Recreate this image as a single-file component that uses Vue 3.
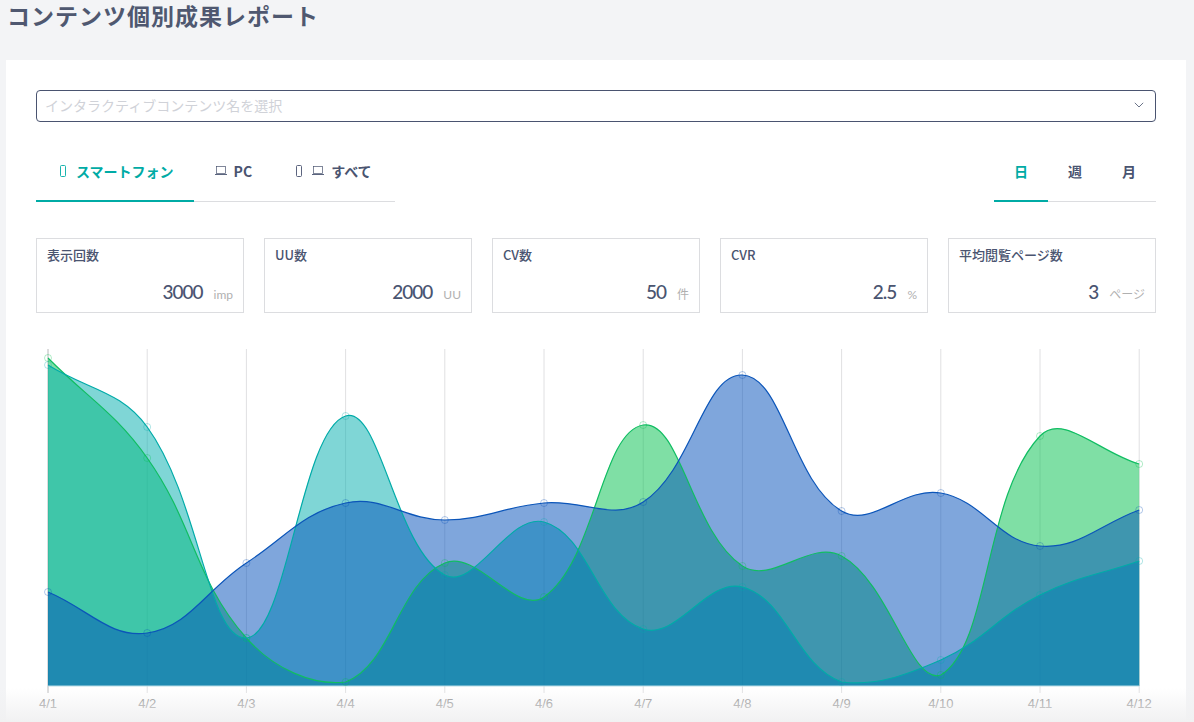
<script setup>
import { ref, computed } from 'vue';

const deviceTabs = [
  { label: 'スマートフォン', icons: ['phone'] },
  { label: 'PC', icons: ['laptop'] },
  { label: 'すべて', icons: ['phone', 'laptop'] }
];
const periodTabs = ['日', '週', '月'];
const activeDevice = ref(0);
const activePeriod = ref(0);

const stats = [
  { title: '表示回数', value: '3000', unit: 'imp' },
  { title: 'UU数', value: '2000', unit: 'UU' },
  { title: 'CV数', value: '50', unit: '件' },
  { title: 'CVR', value: '2.5', unit: '%' },
  { title: '平均閲覧ページ数', value: '3', unit: 'ページ' }
];

const labels = ['4/1', '4/2', '4/3', '4/4', '4/5', '4/6', '4/7', '4/8', '4/9', '4/10', '4/11', '4/12'];

// chart coordinates: svg starts at page y=345
const series = [
  { name: 'green', fill: 'rgba(0,191,75,0.5)', line: '#10bd62', dot: 'rgba(0,191,75,0.3)', ys: [13, 113, 293, 337, 218, 252, 80, 221, 211, 330, 91, 119] },
  { name: 'teal', fill: 'rgba(0,173,173,0.5)', line: '#00aba8', dot: 'rgba(0,173,173,0.3)', ys: [20, 82, 293, 71, 230, 177, 284, 242, 337, 315, 250, 216] },
  { name: 'blue', fill: 'rgba(0,77,185,0.5)', line: '#0b55b9', dot: 'rgba(0,77,185,0.3)', ys: [247, 288, 218, 158, 175, 158, 157, 30, 166, 148, 201, 165] }
];

const baseY = 341;
const startX = 12;
const stepX = 99.2;
const xs = labels.map((_, i) => startX + i * stepX);

// same spline as a tension 0.4 line chart
const spline = (ys) => {
  const pts = ys.map((y, i) => ({ x: xs[i], y }));
  const dist = (a, b) => Math.hypot(a.x - b.x, a.y - b.y);
  const ctrl = pts.map((cur, i) => {
    const prev = pts[i - 1] || cur;
    const next = pts[i + 1] || cur;
    const d01 = dist(prev, cur);
    const d12 = dist(cur, next);
    const fa = 0.4 * (d01 / (d01 + d12));
    const fb = 0.4 * (d12 / (d01 + d12));
    return {
      inX: cur.x - fa * (next.x - prev.x),
      inY: Math.min(cur.y - fa * (next.y - prev.y), baseY),
      outX: cur.x + fb * (next.x - prev.x),
      outY: Math.min(cur.y + fb * (next.y - prev.y), baseY)
    };
  });
  let d = `M${pts[0].x} ${pts[0].y}`;
  for (let i = 1; i < pts.length; i++) {
    d += ` C${ctrl[i - 1].outX} ${ctrl[i - 1].outY} ${ctrl[i].inX} ${ctrl[i].inY} ${pts[i].x} ${pts[i].y}`;
  }
  return d;
};

const lines = computed(() => series.map((s) => {
  const d = spline(s.ys);
  return { ...s, d, area: `${d} L${xs[xs.length - 1]} ${baseY} L${xs[0]} ${baseY} Z` };
}));
</script>

<template>
  <div class="page">
    <h1 class="title">コンテンツ個別成果レポート</h1>
    <div class="card">
      <div class="select">
        <span class="placeholder">インタラクティブコンテンツ名を選択</span>
        <svg class="chevron" width="10" height="6" viewBox="0 0 10 6"><path d="M0.8 0.8 L5 5 L9.2 0.8" fill="none" stroke="#6b7489" stroke-width="1" /></svg>
      </div>

      <div class="tabs-row">
        <div class="tabs">
          <div
            v-for="(tab, i) in deviceTabs"
            :key="tab.label"
            class="tab"
            :class="{ active: activeDevice === i }"
            @click="activeDevice = i"
          >
            <template v-for="icon in tab.icons" :key="icon">
              <svg v-if="icon === 'phone'" class="icon" width="12" height="12" viewBox="0 0 12 12">
                <rect x="3.5" y="0.5" width="5" height="11" rx="1" fill="none" stroke="currentColor" stroke-width="0.9" />
              </svg>
              <svg v-else class="icon" width="12" height="9" viewBox="0 0 12 9">
                <rect x="1.5" y="0.5" width="9" height="7" fill="none" stroke="currentColor" stroke-width="0.7" />
                <path d="M0 8.5 H12" stroke="currentColor" stroke-width="0.9" />
              </svg>
            </template>
            <span>{{ tab.label }}</span>
          </div>
        </div>
        <div class="tabs period">
          <div
            v-for="(tab, i) in periodTabs"
            :key="tab"
            class="tab"
            :class="{ active: activePeriod === i }"
            @click="activePeriod = i"
          >{{ tab }}</div>
        </div>
      </div>

      <div class="stats">
        <div v-for="stat in stats" :key="stat.title" class="stat">
          <div class="stat-title">{{ stat.title }}</div>
          <div class="stat-value">
            <span class="num">{{ stat.value }}</span>
            <span class="unit">{{ stat.unit }}</span>
          </div>
        </div>
      </div>

      <svg class="chart" width="1120" height="372" viewBox="0 0 1120 372">
        <line v-for="(x, i) in xs" :key="x" :x1="x" :x2="x" y1="4" y2="348" :stroke="i === 0 ? '#b8b8ba' : '#e0e0e2'" stroke-width="1" />
        <path v-for="s in lines" :key="s.name" :d="s.area" :fill="s.fill" />
        <line :x1="xs[0]" :x2="xs[11]" :y1="baseY" :y2="baseY" stroke="#b9dde6" stroke-width="1" />
        <path v-for="s in lines" :key="s.name + '-line'" :d="s.d" fill="none" :stroke="s.line" stroke-width="1.2" />
        <g v-for="s in lines" :key="s.name + '-dots'">
          <circle v-for="(y, i) in s.ys" :key="i" :cx="xs[i]" :cy="y" r="3.5" fill="none" :stroke="s.dot" stroke-width="1" />
        </g>
        <text v-for="(label, i) in labels" :key="label" class="axis-label" :x="xs[i]" y="363" text-anchor="middle">{{ label }}</text>
      </svg>
    </div>
    <div class="bottom-fade"></div>
  </div>
</template>

<style scoped>
.page {
  position: relative;
  height: 722px;
  overflow: hidden;
  background: #f3f4f6;
  font-family: "Noto Sans CJK JP", "Noto Sans", sans-serif;
  color: #4a5470;
}

.title {
  margin: 0;
  height: 60px;
  padding-left: 7px;
  font-size: 23px;
  line-height: 30px;
  font-weight: 700;
  letter-spacing: 1px;
  color: #4f5870;
}

.card {
  margin: 0 8px 0 6px;
  height: 700px;
  padding: 30px 30px 0;
  box-sizing: border-box;
  background: #fff;
}

.select {
  display: flex;
  align-items: center;
  justify-content: space-between;
  height: 32px;
  padding: 0 11px 3px 8px;
  box-sizing: border-box;
  border: 1px solid #4a5470;
  border-radius: 4px;
}

.placeholder {
  font-size: 14px;
  color: #d0d2d8;
}

.tabs-row {
  display: flex;
  justify-content: space-between;
  margin-top: 27px;
}

.tabs {
  display: flex;
  width: 359px;
  height: 52px;
  border-bottom: 1px solid #dcdde0;
}

.tabs.period {
  width: 162px;
}

.tab {
  flex: none;
  display: flex;
  align-items: center;
  justify-content: center;
  gap: 7px;
  padding: 0 20px 8px 21px;
  margin-bottom: -1px;
  font-size: 14px;
  font-weight: 700;
  white-space: nowrap;
  color: #4a5470;
  border-bottom: 2px solid transparent;
}

.period .tab {
  width: 54px;
  padding: 0 0 8px;
  box-sizing: border-box;
}

.tab.active {
  color: #00aba5;
  border-bottom-color: #00aba5;
}

.icon {
  flex: none;
}

.stats {
  display: flex;
  gap: 20px;
  margin-top: 36px;
}

.stat {
  flex: 1;
  height: 75px;
  padding: 7px 10px 0;
  box-sizing: border-box;
  border: 1px solid #dcdde0;
}

.stat-title {
  font-size: 13px;
  line-height: 18px;
  font-weight: 500;
}

.stat-value {
  display: flex;
  justify-content: flex-end;
  align-items: baseline;
  gap: 11px;
  margin-top: 15px;
}

.num {
  font-family: "Lato", "Noto Sans", sans-serif;
  font-size: 19px;
  line-height: 26px;
  font-weight: 500;
  letter-spacing: -1px;
}

.unit {
  font-family: "Lato", "Noto Sans CJK JP", sans-serif;
  font-size: 12px;
  color: #b0b0b0;
}

.chart {
  display: block;
  margin-top: 32px;
}

.axis-label {
  font-family: "Liberation Sans", Arial, sans-serif;
  font-size: 13px;
  fill: #868686;
}

.bottom-fade {
  position: absolute;
  left: 0;
  right: 0;
  bottom: 0;
  height: 34px;
  background: linear-gradient(to bottom, rgba(241, 241, 242, 0), rgba(241, 241, 242, 1));
  pointer-events: none;
}
</style>

<style>
html, body {
  margin: 0;
  overflow: hidden;
}
</style>
